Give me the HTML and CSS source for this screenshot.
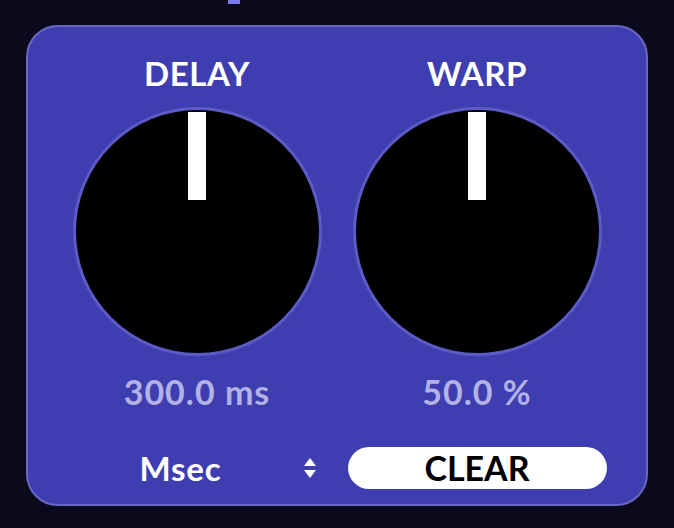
FILE: index.html
```html
<!DOCTYPE html>
<html>
<head>
<meta charset="utf-8">
<link rel="stylesheet" href="styles.css">
</head>
<body>
<div class="top-tab"></div>
<div class="panel">
  <div class="controls">
    <div class="col">
      <div class="label">DELAY</div>
      <div class="knob"><div class="pointer"></div></div>
      <div class="value">300.0 ms</div>
    </div>
    <div class="col">
      <div class="label">WARP</div>
      <div class="knob"><div class="pointer"></div></div>
      <div class="value">50.0 %</div>
    </div>
  </div>
  <div class="bottom">
    <div class="select">
      <span class="select-text">Msec</span>
      <svg class="arrows" width="14" height="22" viewBox="0 0 14 22">
        <polygon points="7,1 13,9 1,9" fill="#ffffff"/>
        <polygon points="1,13 13,13 7,21" fill="#ffffff"/>
      </svg>
    </div>
    <div class="clear-btn">CLEAR</div>
  </div>
</div>
</body>
</html>
```
FILE: styles.css
```css
html, body {
  margin: 0;
  padding: 0;
  background: #0b0a1d;
  font-family: "Lato", "Noto Sans", sans-serif;
}
.top-tab {
  width: 12px;
  height: 4px;
  margin-left: 228px;
  background: #7b79f0;
}
.panel {
  box-sizing: border-box;
  width: 622px;
  height: 481px;
  margin: 21px auto 0;
  background: #3e3eb1;
  border: 2px solid #6a68c4;
  border-radius: 32px;
  padding-top: 30px;
}
.controls {
  display: grid;
  grid-template-columns: 280px 280px;
  justify-content: center;
}
.col {
  display: flex;
  flex-direction: column;
  align-items: center;
}
.label {
  color: #ffffff;
  font-weight: 700;
  font-size: 33px;
  line-height: 33px;
  height: 33px;
  letter-spacing: 0.6px;
}
.knob {
  box-sizing: border-box;
  width: 249px;
  height: 249px;
  margin-top: 17px;
  border-radius: 50%;
  background: #000000;
  border: 3px solid #5c5bc6;
  display: flex;
  justify-content: center;
  padding-top: 2px;
}
.pointer {
  width: 18px;
  height: 88px;
  background: #ffffff;
}
.value {
  margin-top: 19px;
  color: #b3b2e6;
  font-weight: 700;
  font-size: 34px;
  line-height: 34px;
  height: 34px;
  letter-spacing: 1px;
}
.bottom {
  display: grid;
  grid-template-columns: 280px 280px;
  justify-content: center;
  margin-top: 38px;
}
.select {
  justify-self: center;
  width: 259px;
  height: 42px;
  box-sizing: border-box;
  display: flex;
  align-items: center;
  justify-content: space-between;
  padding-left: 72px;
  padding-right: 10px;
}
.select-text {
  color: #ffffff;
  font-weight: 700;
  font-size: 33px;
  line-height: 42px;
  letter-spacing: 0.8px;
}
.arrows {
  display: block;
}
.clear-btn {
  justify-self: center;
  width: 259px;
  height: 42px;
  border-radius: 21px;
  background: #ffffff;
  color: #000000;
  font-weight: 700;
  font-size: 34px;
  line-height: 42px;
  text-align: center;
}
```
